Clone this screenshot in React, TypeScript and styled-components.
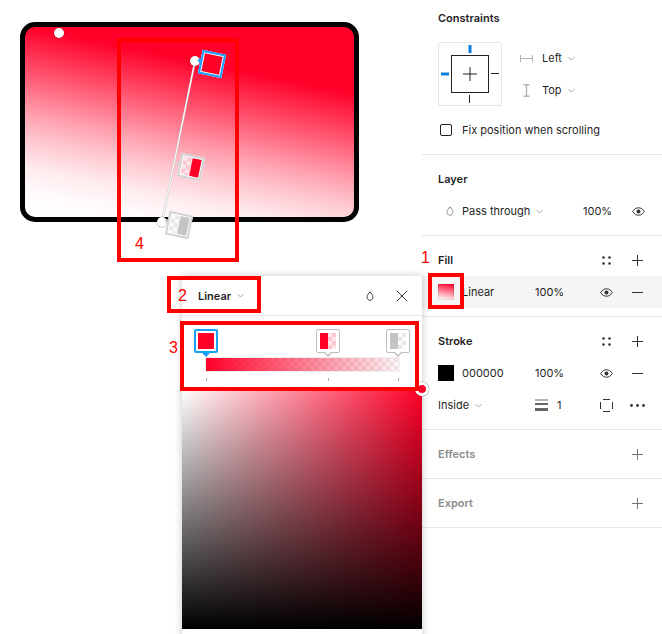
import React from "react";
import styled, { createGlobalStyle, css } from "styled-components";

const RED = "#ff0029";
const INK = "#1f1f1f";

const Global = createGlobalStyle`
  html, body { margin: 0; padding: 0; background: #fff; }
  body { font-family: "Inter", "Liberation Sans", sans-serif; -webkit-font-smoothing: antialiased; }
`;

const Page = styled.div`
  position: relative;
  width: 662px;
  height: 634px;
  overflow: hidden;
  display: grid;
  grid-template-columns: 422px 240px;
  background: #fff;
  color: ${INK};
  font-size: 11px;
`;

const Canvas = styled.div`
  position: relative;
`;

const Frame = styled.div`
  position: absolute;
  left: 20px;
  top: 22px;
  width: 339px;
  height: 200px;
  box-sizing: border-box;
  border: 5px solid #000;
  border-radius: 15px;
  background: linear-gradient(
    191.6deg,
    rgba(255, 0, 41, 1) 25.8%,
    rgba(255, 0, 41, 0.69) 42.8%,
    rgba(255, 0, 41, 0.4) 58.4%,
    rgba(255, 0, 41, 0.23) 68.8%,
    rgba(255, 0, 41, 0.08) 80.6%,
    rgba(255, 0, 41, 0.02) 90%,
    rgba(255, 0, 41, 0) 97%
  );
  background-origin: padding-box;
`;

const Knob = styled.div<{ $x: number; $y: number }>`
  position: absolute;
  left: ${(p) => p.$x - 5}px;
  top: ${(p) => p.$y - 5}px;
  width: 10px;
  height: 10px;
  border-radius: 50%;
  background: #fff;
  box-shadow: 0 0 0 0.5px rgba(0, 0, 0, 0.3);
`;

const HandleLine = styled.svg`
  position: absolute;
  left: 0;
  top: 0;
  width: 422px;
  height: 270px;
`;

const checker = (color: string, base: string, size = 8) => css`
  background-color: ${base};
  background-image: conic-gradient(${color} 25%, transparent 0 50%, ${color} 0 75%, transparent 0);
  background-size: ${size}px ${size}px;
`;

const CanvasStop = styled.div<{ $x: number; $y: number; $active?: boolean }>`
  position: absolute;
  left: ${(p) => p.$x - 12}px;
  top: ${(p) => p.$y - 12}px;
  width: 24px;
  height: 24px;
  box-sizing: border-box;
  transform: rotate(11.6deg);
  border: 2px solid ${(p) => (p.$active ? "#18a0fb" : "#d2d2d2")};
  padding: 1px;
  background: #fff;
  &::before {
    content: "";
    position: absolute;
    left: -5px;
    top: 6px;
    border: 3px solid transparent;
    border-left: 0;
    border-right-color: ${(p) => (p.$active ? "#18a0fb" : "#d2d2d2")};
  }
`;

const SwatchFill = styled.div<{ $tint?: "pink" | "grey" }>`
  position: relative;
  width: 100%;
  height: 100%;
  ${(p) =>
    p.$tint === "pink"
      ? checker("#fbc6d0", "#fde6ea")
      : p.$tint === "grey"
        ? checker("#e8e8e8", "#fafafa")
        : css`background: ${RED};`}
`;

const HalfColor = styled.div<{ $color: string; $side: "left" | "right" }>`
  position: absolute;
  top: 0;
  bottom: 0;
  width: 50%;
  ${(p) => p.$side}: 0;
  background: ${(p) => p.$color};
`;

const Panel = styled.aside`
  display: flex;
  flex-direction: column;
`;

const Section = styled.section<{ $h: number; $top?: number }>`
  height: ${(p) => p.$h}px;
  padding-top: ${(p) => p.$top ?? 0}px;
  box-sizing: border-box;
  border-bottom: 1px solid #e6e6e6;
`;

const Heading = styled.div<{ $muted?: boolean; $gap?: number }>`
  display: grid;
  grid-template-columns: 154px 28px 34px;
  height: 16px;
  margin-bottom: ${(p) => p.$gap ?? 0}px;
  align-items: center;
  padding-left: 16px;
  font-size: 11px;
  font-weight: 600;
  color: ${(p) => (p.$muted ? "#8c8c8c" : INK)};
`;

const Cell = styled.span`
  display: flex;
  align-items: center;
  justify-content: center;
  height: 100%;
`;

const ConstraintsRow = styled.div`
  display: flex;
  padding: 16px 0 0 16px;
  gap: 18px;
`;

const ConstraintBox = styled.div`
  position: relative;
  width: 64px;
  height: 64px;
  box-sizing: border-box;
  border: 1px solid #e6e6e6;
  border-radius: 2px;
`;

const ConstraintList = styled.div`
  display: flex;
  flex-direction: column;
`;

const ConstraintItem = styled.div`
  display: flex;
  align-items: center;
  height: 32px;
  gap: 9px;
`;

const ConstraintValue = styled.span`
  margin-right: -3px;
`;

const Check = styled.label`
  display: flex;
  align-items: center;
  gap: 10px;
  margin: 14px 0 0 18px;
  height: 20px;
  font-size: 11px;
`;

const CheckBox = styled.span`
  width: 10px;
  height: 10px;
  border: 1px solid #222;
  border-radius: 2px;
`;

const Row = styled.div<{ $columns: string; $active?: boolean }>`
  display: grid;
  grid-template-columns: ${(p) => p.$columns};
  align-items: center;
  height: 32px;
  padding-left: 16px;
  background: ${(p) => (p.$active ? "#f5f5f5" : "transparent")};
  font-size: 11px;
`;

const Swatch = styled.span<{ $gradient?: boolean }>`
  display: block;
  width: 16px;
  height: 16px;
  background: ${(p) => (p.$gradient ? `linear-gradient(190deg, ${RED}, #fff 95%)` : "#000")};
  box-shadow: ${(p) => (p.$gradient ? "inset 0 0 0 1px rgba(0,0,0,.1)" : "none")};
`;

const Popup = styled.div`
  position: absolute;
  left: 182px;
  top: 276px;
  width: 240px;
  height: 370px;
  background: #fff;
  box-shadow: 0 0 8px rgba(0, 0, 0, 0.22);
`;

const PopupHeader = styled.header`
  display: flex;
  align-items: center;
  height: 40px;
  box-sizing: border-box;
  border-bottom: 1px solid #e6e6e6;
  padding: 0 14px 0 16px;
  font-weight: 600;
  font-size: 11px;
`;

const HeaderLabel = styled.span`
  display: flex;
  align-items: center;
  gap: 6px;
  flex: 1;
`;

const HeaderTools = styled.span`
  display: flex;
  align-items: center;
  gap: 22px;
`;

const StopArea = styled.div`
  position: relative;
  height: 74px;
`;

const StopPin = styled.div<{ $left: number; $active?: boolean }>`
  position: absolute;
  left: ${(p) => p.$left}px;
  top: 13px;
  width: 24px;
  height: 24px;
  box-sizing: border-box;
  padding: ${(p) => (p.$active ? 2 : 3)}px;
  background: #fff;
  border: ${(p) => (p.$active ? "2px solid #18a0fb" : "1px solid #bdbdbd")};
  border-radius: 2px;
  &::before {
    content: "";
    position: absolute;
    left: ${(p) => (p.$active ? 6 : 7)}px;
    bottom: -${(p) => (p.$active ? 6 : 5)}px;
    border: 4px solid transparent;
    border-bottom: 0;
    border-top-color: ${(p) => (p.$active ? "#18a0fb" : "#bdbdbd")};
  }
  &::after {
    content: "";
    position: absolute;
    left: 8px;
    bottom: -3px;
    display: ${(p) => (p.$active ? "none" : "block")};
    border: 3px solid transparent;
    border-bottom: 0;
    border-top-color: #fff;
  }
`;

const Bar = styled.div`
  position: absolute;
  left: 24px;
  top: 42px;
  width: 193px;
  height: 13px;
  ${checker("#ececec", "#fff")}
  box-shadow: 0 0 0 0.5px #ddd;
  &::after {
    content: "";
    position: absolute;
    inset: 0;
    background: linear-gradient(90deg, ${RED}, rgba(255, 0, 41, 0.03));
  }
`;

const Tick = styled.span<{ $left: number }>`
  position: absolute;
  left: ${(p) => p.$left}px;
  top: 62px;
  width: 1px;
  height: 3px;
  background: #aaa;
`;

const ColorField = styled.div`
  height: 239px;
  background: linear-gradient(to top, #000, transparent), linear-gradient(to right, #fff, ${RED});
`;

const FieldDot = styled.div`
  position: absolute;
  left: 415px;
  top: 382px;
  width: 8px;
  height: 8px;
  border: 3px solid #fff;
  border-radius: 50%;
  background: ${RED};
  box-shadow: 0 0 0 0.5px rgba(0, 0, 0, 0.35);
`;

const Callout = styled.div<{ $x: number; $y: number; $w: number; $h: number }>`
  position: absolute;
  left: ${(p) => p.$x}px;
  top: ${(p) => p.$y}px;
  width: ${(p) => p.$w}px;
  height: ${(p) => p.$h}px;
  box-sizing: border-box;
  border: 4px solid #ff0000;
`;

const CalloutNumber = styled.span<{ $x: number; $y: number }>`
  position: absolute;
  left: ${(p) => p.$x}px;
  top: ${(p) => p.$y}px;
  color: #ff0000;
  font-family: "Liberation Sans", sans-serif;
  font-size: 16px;
  line-height: 18px;
`;

const Chevron = ({ c = "#a6a6a6" }: { c?: string }) => (
  <svg width="7" height="5" viewBox="0 0 7 5" fill="none"><path d="M.5 1 3.500 4 6.500 1" stroke={c} /></svg>
);
const Plus = ({ c = "#333" }: { c?: string }) => (
  <svg width="11" height="11" viewBox="0 0 11 11"><path d="M5.500 0v11M0 5.500h11" stroke={c} /></svg>
);
const Minus = () => (
  <svg width="11" height="1" viewBox="0 0 11 1"><path d="M0 .5h11" stroke="#333" /></svg>
);
const Eye = () => (
  <svg width="13" height="9" viewBox="0 0 13 9" fill="none">
    <path d="M.7 4.500C2.200 2 4.100.8 6.500.8s4.300 1.200 5.800 3.700c-1.500 2.500-3.400 3.700-5.800 3.700S2.200 7 .7 4.500Z" stroke="#333" />
    <circle cx="6.500" cy="4.500" r="2" fill="#333" />
  </svg>
);
const Dots4 = () => (
  <svg width="9" height="9" viewBox="0 0 9 9" fill="#333">
    <circle cx="1.500" cy="1.500" r="1.300" /><circle cx="7.500" cy="1.500" r="1.300" />
    <circle cx="1.500" cy="7.500" r="1.300" /><circle cx="7.500" cy="7.500" r="1.300" />
  </svg>
);
const Drop = ({ c = "#8c8c8c" }: { c?: string }) => (
  <svg width="8" height="10" viewBox="0 0 8 10" fill="none">
    <path d="M4 .8 1.800 3.600C.2 5.800 1.600 9.300 4 9.300s3.800-3.500 2.200-5.700L4 .8Z" stroke={c} />
  </svg>
);

export default function App() {
  return (
    <Page>
      <Global />
      <Canvas>
        <Frame />
        <HandleLine viewBox="0 0 422 270">
          <line x1="195" y1="61" x2="162" y2="222" stroke="#c9c9c9" strokeWidth="2" />
          <line x1="195" y1="61" x2="162" y2="222" stroke="#fff" strokeWidth="1" />
        </HandleLine>
        <Knob $x={58.5} $y={33} />
        <Knob $x={195} $y={61} />
        <Knob $x={162} $y={222} />
        <CanvasStop $x={212} $y={64} $active><SwatchFill /></CanvasStop>
        <CanvasStop $x={191} $y={167}>
          <SwatchFill $tint="pink"><HalfColor $side="right" $color={RED} /></SwatchFill>
        </CanvasStop>
        <CanvasStop $x={179} $y={225}>
          <SwatchFill $tint="grey"><HalfColor $side="right" $color="#c4c4c4" /></SwatchFill>
        </CanvasStop>
      </Canvas>

      <Panel>
        <Section $h={155} $top={10}>
          <Heading>Constraints</Heading>
          <ConstraintsRow>
            <ConstraintBox>
              <svg width="62" height="62" viewBox="0 0 62 62" fill="none">
                <rect x="12.500" y="12.500" width="37" height="37" stroke="#222" />
                <path d="M31 24v14M24 31h14" stroke="#222" />
                <path d="M31 2v8" stroke="#0d7de0" strokeWidth="3" />
                <path d="M2 31h8" stroke="#0d7de0" strokeWidth="3" />
                <path d="M52 30.500h8M30.500 52v8" stroke="#222" />
              </svg>
            </ConstraintBox>
            <ConstraintList>
              <ConstraintItem>
                <svg width="13" height="7" viewBox="0 0 13 7"><path d="M.5 0v7M12.500 0v7M1 3.500h11" stroke="#b3b3b3" /></svg>
                <ConstraintValue>Left</ConstraintValue>
                <Chevron />
              </ConstraintItem>
              <ConstraintItem>
                <svg width="13" height="13" viewBox="0 0 13 13"><path d="M3.500.7h6M3.500 12.300h6M6.500 1v11" stroke="#b3b3b3" strokeWidth="1.400" /></svg>
                <ConstraintValue>Top</ConstraintValue>
                <Chevron />
              </ConstraintItem>
            </ConstraintList>
          </ConstraintsRow>
          <Check><CheckBox />Fix position when scrolling</Check>
        </Section>

        <Section $h={81} $top={16}>
          <Heading $gap={8}>Layer</Heading>
          <Row $columns="24px 121px 47px 16px">
            <Cell><Drop /></Cell>
            <HeaderLabel>Pass through <Chevron /></HeaderLabel>
            <span>100%</span>
            <Cell><Eye /></Cell>
          </Row>
        </Section>

        <Section $h={81} $top={16}>
          <Heading $gap={8}>Fill<Cell><Dots4 /></Cell><Cell><Plus /></Cell></Heading>
          <Row $columns="24px 73px 57px 28px 34px" $active>
            <Swatch $gradient />
            <span>Linear</span>
            <span>100%</span>
            <Cell><Eye /></Cell>
            <Cell><Minus /></Cell>
          </Row>
        </Section>

        <Section $h={113} $top={16}>
          <Heading $gap={8}>Stroke<Cell><Dots4 /></Cell><Cell><Plus /></Cell></Heading>
          <Row $columns="24px 73px 57px 28px 34px">
            <Swatch />
            <span>000000</span>
            <span>100%</span>
            <Cell><Eye /></Cell>
            <Cell><Minus /></Cell>
          </Row>
          <Row $columns="97px 22px 35px 28px 34px">
            <HeaderLabel>Inside <Chevron /></HeaderLabel>
            <svg width="13" height="13" viewBox="0 0 13 13"><path d="M0 1h13" stroke="#666" /><path d="M0 5h13" stroke="#666" strokeWidth="2" /><path d="M0 10.500h13" stroke="#666" strokeWidth="3" /></svg>
            <span>1</span>
            <Cell>
              <svg width="13" height="13" viewBox="0 0 13 13" fill="none"><path d="M3 .5h7M3 12.500h7M.5 3v7M12.500 3v7" stroke="#333" /></svg>
            </Cell>
            <Cell>
              <svg width="15" height="3" viewBox="0 0 15 3" fill="#333"><circle cx="1.500" cy="1.500" r="1.400" /><circle cx="7.500" cy="1.500" r="1.400" /><circle cx="13.500" cy="1.500" r="1.400" /></svg>
            </Cell>
          </Row>
        </Section>

        <Section $h={49} $top={16}>
          <Heading $muted>Effects<span /><Cell><Plus c="#777" /></Cell></Heading>
        </Section>
        <Section $h={49} $top={16}>
          <Heading $muted>Export<span /><Cell><Plus c="#777" /></Cell></Heading>
        </Section>
      </Panel>

      <Popup>
        <PopupHeader>
          <HeaderLabel>Linear <Chevron /></HeaderLabel>
          <HeaderTools>
            <Drop c="#333" />
            <svg width="12" height="12" viewBox="0 0 12 12"><path d="M.7.7l10.600 10.600M11.300.7.700 11.300" stroke="#333" /></svg>
          </HeaderTools>
        </PopupHeader>
        <StopArea>
          <StopPin $left={12} $active><SwatchFill /></StopPin>
          <StopPin $left={134}>
            <SwatchFill $tint="pink"><HalfColor $side="left" $color={RED} /></SwatchFill>
          </StopPin>
          <StopPin $left={204}>
            <SwatchFill $tint="grey"><HalfColor $side="left" $color="#c4c4c4" /></SwatchFill>
          </StopPin>
          <Bar />
          <Tick $left={24} />
          <Tick $left={146} />
          <Tick $left={216} />
        </StopArea>
        <ColorField />
      </Popup>

      <FieldDot />
      <Callout $x={117} $y={38} $w={122} $h={224} />
      <Callout $x={428} $y={273} $w={36} $h={36} />
      <Callout $x={167} $y={276} $w={94} $h={37} />
      <Callout $x={180} $y={321} $w={239} $h={70} />
      <CalloutNumber $x={421} $y={249}>1</CalloutNumber>
      <CalloutNumber $x={178} $y={287}>2</CalloutNumber>
      <CalloutNumber $x={169} $y={339}>3</CalloutNumber>
      <CalloutNumber $x={135} $y={235}>4</CalloutNumber>
    </Page>
  );
}
